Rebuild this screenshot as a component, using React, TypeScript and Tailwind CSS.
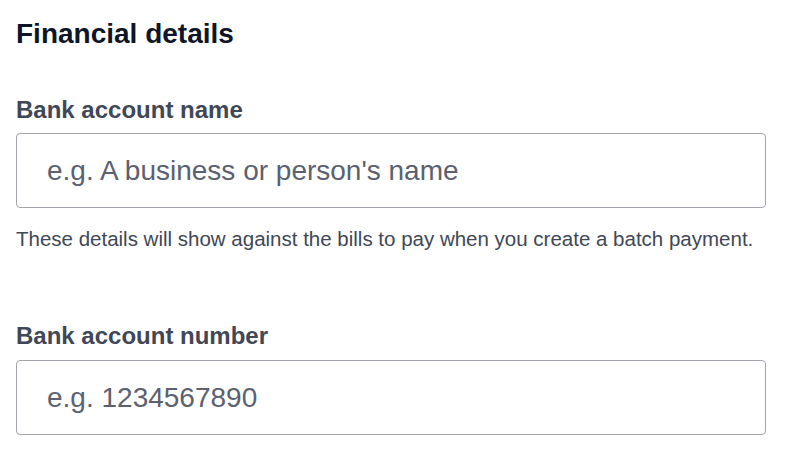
import React from 'react';

const Field = ({ label, placeholder, className, gap }: { label: string; placeholder: string; className?: string; gap: string }) => (
  <div className={className}>
    <label className="block text-[24px] leading-[28px] font-bold text-[#404756]">{label}</label>
    <input
      type="text"
      placeholder={placeholder}
      className={`${gap} block w-[750px] h-[75px] rounded-[4px] border border-[#a3a5ad] bg-white px-[30px] text-[28px] text-[#2a2f3a] placeholder:text-[#5b6170] outline-none`}
    />
  </div>
);

export default function App() {
  return (
    <div className="w-[786px] h-[452px] bg-white px-4 pt-[18px] font-['Liberation_Sans',Arial,sans-serif]">
      <h2 className="text-[28px] leading-[32px] font-bold text-[#0d1526]">Financial details</h2>
      <Field className="mt-[46px]" gap="mt-[9px]" label="Bank account name" placeholder="e.g. A business or person's name" />
      <p className="mt-[19px] text-[20.5px] leading-[24px] text-[#404756]">
        These details will show against the bills to pay when you create a batch payment.
      </p>
      <Field className="mt-[71px]" gap="mt-[10px]" label="Bank account number" placeholder="e.g. 1234567890" />
    </div>
  );
}
